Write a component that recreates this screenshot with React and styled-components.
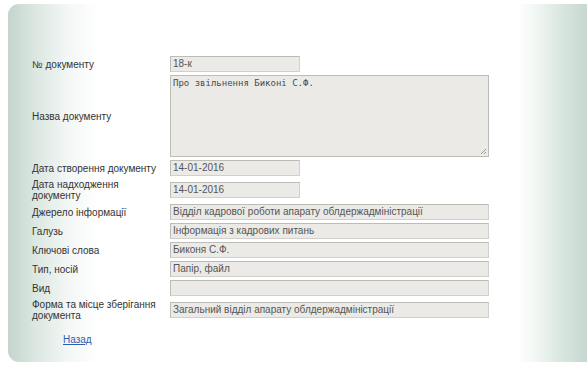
import React from "react";
import styled, { createGlobalStyle } from "styled-components";

const Global = createGlobalStyle`
  html, body { margin: 0; padding: 0; background: #fff; }
  body { font-family: "Liberation Sans", Arial, sans-serif; overflow: hidden; }
`;

const Card = styled.div`
  margin: 4px -12px 0 8px;
  height: 358px;
  box-sizing: border-box;
  border-radius: 11px;
  background: linear-gradient(
    to right,
    #c3d5cc 0px,
    #dae6e0 25px,
    #f3f7f5 60px,
    #ffffff 90px,
    #ffffff calc(100% - 82px),
    #f1f6f3 calc(100% - 62px),
    #d8e5df calc(100% - 36px),
    #c6d8cf calc(100% - 12px),
    #c2d5cc 100%
  );
  padding: 52px 0 0 24px;
`;

const Form = styled.div`
  display: grid;
  grid-template-columns: 138px auto;
  row-gap: 3px;
  align-items: center;
  justify-items: start;
`;

const Label = styled.div`
  font-size: 10px;
  line-height: 11px;
  color: #333;
  width: 130px;
`;

const Field = styled.div`
  box-sizing: border-box;
  width: ${(p) => (p.$wide ? "319px" : "130px")};
  height: 16px;
  background: #ebeae6;
  border: 1px solid #bdbdb8;
  border-right-color: #d0d0cc;
  border-bottom-color: #d0d0cc;
  font-size: 10px;
  line-height: 14px;
  color: #555;
  padding: 0 2px;
  white-space: nowrap;
  overflow: hidden;
`;

const Area = styled.div`
  position: relative;
  box-sizing: border-box;
  width: 319px;
  height: 82px;
  background: #ebeae6;
  border: 1px solid #bdbdb8;
  font-family: "DejaVu Sans Mono", "Liberation Mono", monospace;
  font-size: 9px;
  line-height: 12px;
  color: #4a4a4a;
  padding: 1px 2px;
`;

const Grip = styled.svg`
  position: absolute;
  right: 1px;
  bottom: 1px;
`;

const Back = styled.a`
  display: inline-block;
  margin: 13px 0 0 31px;
  font-size: 10px;
  color: #2b5fb3;
  text-decoration: underline;
`;

const rows = [
  { label: "Дата створення документу", value: "14-01-2016" },
  { label: "Дата надходження документу", value: "14-01-2016" },
  { label: "Джерело інформації", value: "Відділ кадрової роботи апарату облдержадміністрації", wide: true },
  { label: "Галузь", value: "Інформація з кадрових питань", wide: true },
  { label: "Ключові слова", value: "Биконя С.Ф.", wide: true },
  { label: "Тип, носій", value: "Папір, файл", wide: true },
  { label: "Вид", value: "", wide: true },
  { label: "Форма та місце зберігання документа", value: "Загальний відділ апарату облдержадміністрації", wide: true },
];

export default function App() {
  return (
    <>
      <Global />
      <Card>
        <Form>
          <Label>№ документу</Label>
          <Field>18-к</Field>
          <Label>Назва документу</Label>
          <Area>
            Про звільнення Биконі С.Ф.
            <Grip width="7" height="7" viewBox="0 0 7 7">
              <path d="M6 1 L1 6 M6 4 L4 6" stroke="#999" strokeWidth="1" />
            </Grip>
          </Area>
          {rows.map((r) => (
            <React.Fragment key={r.label}>
              <Label>{r.label}</Label>
              <Field $wide={r.wide}>{r.value}</Field>
            </React.Fragment>
          ))}
        </Form>
        <Back href="#">Назад</Back>
      </Card>
    </>
  );
}
